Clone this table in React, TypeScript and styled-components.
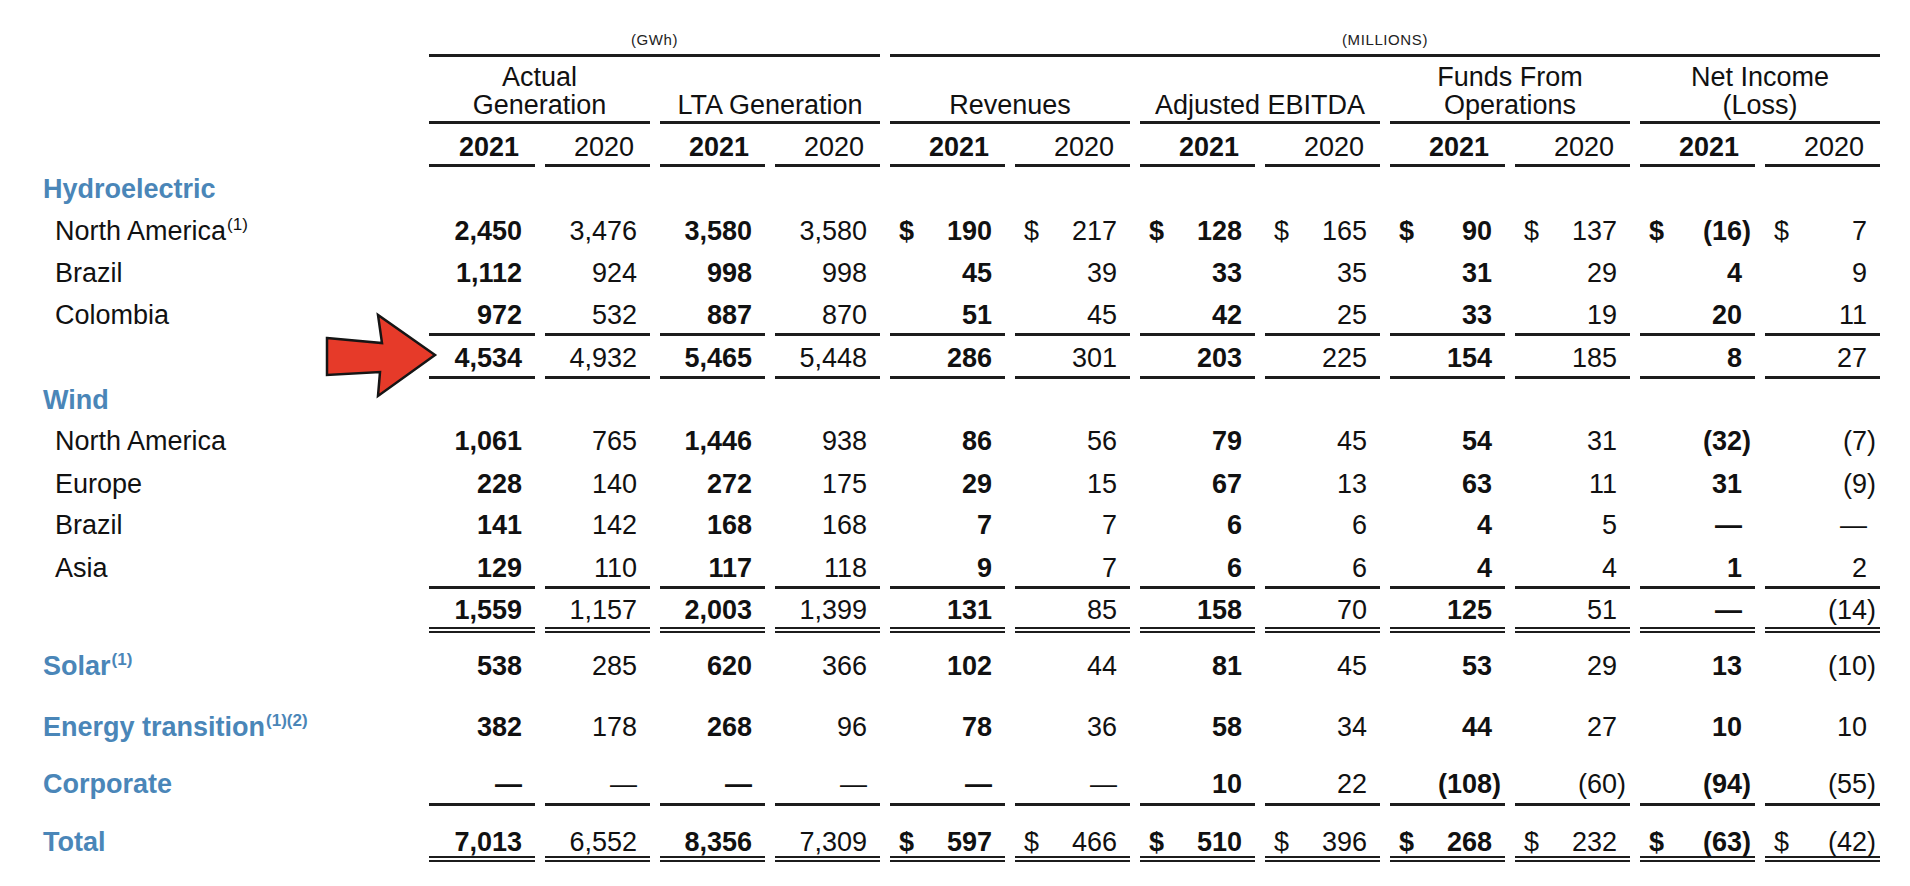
import React from "react";
import styled, { createGlobalStyle } from "styled-components";

const GlobalStyle = createGlobalStyle`
  html, body { margin: 0; padding: 0; background: #ffffff; }
  body { font-family: "Liberation Sans", Arial, sans-serif; color: #111111; }
`;

const BLUE = "#4a86b8";
const INK = "#1c1c1c";
const COLS = "419px 106px 105px 105px 105px repeat(8, 115px)";

type Rule = "none" | "single" | "double";

const ruleCss = (rule: Rule, visible: boolean) => {
  if (rule === "none") return "border-bottom: 0;";
  const w = rule === "double" ? 6 : 3;
  const style = rule === "double" ? "double" : "solid";
  return `border-bottom: ${w}px ${style} ${visible ? INK : "transparent"};`;
};

const Page = styled.div`
  position: relative;
  width: 1910px;
  height: 886px;
  overflow: hidden;
`;

const Table = styled.div`
  display: flex;
  flex-direction: column;
`;

const Row = styled.div<{ $pt: number; $pb: number }>`
  display: grid;
  grid-template-columns: ${COLS};
  column-gap: 10px;
  font-size: 27px;
  line-height: 28px;
  & > * {
    padding-top: ${(p) => p.$pt}px;
    padding-bottom: ${(p) => p.$pb}px;
  }
`;

const UnitCell = styled.div<{ $span: number; $rule: Rule; $visible: boolean }>`
  grid-column: span ${(p) => p.$span};
  font-size: 15px;
  line-height: 18px;
  letter-spacing: 0.6px;
  text-align: center;
  color: #222;
  ${(p) => ruleCss(p.$rule, p.$visible)}
`;

const GroupCell = styled.div<{ $rule: Rule; $visible: boolean; $span: number }>`
  grid-column: span ${(p) => p.$span};
  display: flex;
  flex-direction: column;
  justify-content: flex-end;
  align-items: center;
  text-align: center;
  ${(p) => ruleCss(p.$rule, p.$visible)}
`;

const YearCell = styled.div<{ $bold: boolean; $rule: Rule; $visible: boolean }>`
  text-align: right;
  padding-right: 16px;
  font-weight: ${(p) => (p.$bold ? 700 : 400)};
  ${(p) => ruleCss(p.$rule, p.$visible)}
`;

const LabelCell = styled.div<{ $head: boolean; $rule: Rule }>`
  padding-left: ${(p) => (p.$head ? 43 : 55)}px;
  color: ${(p) => (p.$head ? BLUE : "#111")};
  font-weight: ${(p) => (p.$head ? 700 : 400)};
  white-space: nowrap;
  ${(p) => ruleCss(p.$rule, false)}
`;

const NumCell = styled.div<{ $bold: boolean; $rule: Rule; $visible: boolean }>`
  display: flex;
  justify-content: space-between;
  align-items: baseline;
  padding-left: 9px;
  padding-right: 13px;
  font-weight: ${(p) => (p.$bold ? 700 : 400)};
  white-space: nowrap;
  ${(p) => ruleCss(p.$rule, p.$visible)}
`;

const Dollar = styled.span``;

const Amount = styled.span`
  margin-left: auto;
`;

const Hang = styled.span`
  margin-right: -9px;
`;

const Sup = styled.sup`
  font-size: 17px;
  line-height: 0;
  vertical-align: 10px;
  font-weight: inherit;
  margin-left: 1px;
`;

const ArrowSvg = styled.svg`
  position: absolute;
  left: 320px;
  top: 310px;
  width: 122px;
  height: 92px;
  overflow: visible;
`;

interface DataRow {
  label?: string;
  sup?: string;
  head?: boolean;
  values?: string[];
  dollar?: boolean;
  rule?: Rule;
  pt: number;
  pb: number;
}

const rows: DataRow[] = [
  { label: "Hydroelectric", head: true, pt: 8, pb: 7 },
  {
    label: "North America",
    sup: "(1)",
    values: ["2,450", "3,476", "3,580", "3,580", "190", "217", "128", "165", "90", "137", "(16)", "7"],
    dollar: true,
    pt: 7,
    pb: 7,
  },
  {
    label: "Brazil",
    values: ["1,112", "924", "998", "998", "45", "39", "33", "35", "31", "29", "4", "9"],
    pt: 7,
    pb: 7,
  },
  {
    label: "Colombia",
    values: ["972", "532", "887", "870", "51", "45", "42", "25", "33", "19", "20", "11"],
    rule: "single",
    pt: 7,
    pb: 4,
  },
  {
    values: ["4,534", "4,932", "5,465", "5,448", "286", "301", "203", "225", "154", "185", "8", "27"],
    rule: "single",
    pt: 8,
    pb: 4,
  },
  { label: "Wind", head: true, pt: 7, pb: 6 },
  {
    label: "North America",
    values: ["1,061", "765", "1,446", "938", "86", "56", "79", "45", "54", "31", "(32)", "(7)"],
    pt: 7,
    pb: 7,
  },
  {
    label: "Europe",
    values: ["228", "140", "272", "175", "29", "15", "67", "13", "63", "11", "31", "(9)"],
    pt: 8,
    pb: 5,
  },
  {
    label: "Brazil",
    values: ["141", "142", "168", "168", "7", "7", "6", "6", "4", "5", "—", "—"],
    pt: 8,
    pb: 6,
  },
  {
    label: "Asia",
    values: ["129", "110", "117", "118", "9", "7", "6", "6", "4", "4", "1", "2"],
    rule: "single",
    pt: 9,
    pb: 4,
  },
  {
    values: ["1,559", "1,157", "2,003", "1,399", "131", "85", "158", "70", "125", "51", "—", "(14)"],
    rule: "double",
    pt: 7,
    pb: 3,
  },
  {
    label: "Solar",
    sup: "(1)",
    head: true,
    values: ["538", "285", "620", "366", "102", "44", "81", "45", "53", "29", "13", "(10)"],
    pt: 19,
    pb: 16,
  },
  {
    label: "Energy transition",
    sup: "(1)(2)",
    head: true,
    values: ["382", "178", "268", "96", "78", "36", "58", "34", "44", "27", "10", "10"],
    pt: 17,
    pb: 19,
  },
  {
    label: "Corporate",
    head: true,
    values: ["—", "—", "—", "—", "—", "—", "10", "22", "(108)", "(60)", "(94)", "(55)"],
    rule: "single",
    pt: 10,
    pb: 5,
  },
  {
    label: "Total",
    head: true,
    values: ["7,013", "6,552", "8,356", "7,309", "597", "466", "510", "396", "268", "232", "(63)", "(42)"],
    dollar: true,
    rule: "double",
    pt: 22,
    pb: 0,
  },
];

const groups: { lines: string[] }[] = [
  { lines: ["Actual", "Generation"] },
  { lines: ["LTA Generation"] },
  { lines: ["Revenues"] },
  { lines: ["Adjusted EBITDA"] },
  { lines: ["Funds From", "Operations"] },
  { lines: ["Net Income", "(Loss)"] },
];

const renderAmount = (v: string) => {
  if (v.endsWith(")")) {
    return (
      <>
        {v.slice(0, -1)}
        <Hang>)</Hang>
      </>
    );
  }
  return v;
};

const YEARS = Array.from({ length: 12 }, (_, i) => (i % 2 === 0 ? "2021" : "2020"));

export default function App() {
  return (
    <Page>
      <GlobalStyle />
      <Table>
        <Row $pt={31} $pb={5}>
          <UnitCell $span={1} $rule="single" $visible={false} />
          <UnitCell $span={4} $rule="single" $visible>
            (GWh)
          </UnitCell>
          <UnitCell $span={8} $rule="single" $visible>
            (MILLIONS)
          </UnitCell>
        </Row>
        <Row $pt={6} $pb={2}>
          <GroupCell $span={1} $rule="single" $visible={false} />
          {groups.map((g, i) => (
            <GroupCell key={i} $span={2} $rule="single" $visible>
              {g.lines.map((l) => (
                <span key={l}>{l}</span>
              ))}
            </GroupCell>
          ))}
        </Row>
        <Row $pt={9} $pb={3}>
          <YearCell $bold={false} $rule="single" $visible={false} />
          {YEARS.map((y, i) => (
            <YearCell key={i} $bold={i % 2 === 0} $rule="single" $visible>
              {y}
            </YearCell>
          ))}
        </Row>
        {rows.map((r, ri) => {
          const rule: Rule = r.rule ?? "none";
          return (
            <Row key={ri} $pt={r.pt} $pb={r.pb}>
              <LabelCell $head={!!r.head} $rule={rule}>
                {r.label}
                {r.sup && <Sup>{r.sup}</Sup>}
              </LabelCell>
              {r.values?.map((v, i) => (
                <NumCell key={i} $bold={i % 2 === 0} $rule={rule} $visible>
                  {r.dollar && i >= 4 && <Dollar>$</Dollar>}
                  <Amount>{renderAmount(v)}</Amount>
                </NumCell>
              ))}
            </Row>
          );
        })}
      </Table>
      <ArrowSvg viewBox="0 0 122 92">
        <polygon
          points="7,28 62,33 58,5 115,45 58,86 60,62 7,65"
          fill="#e63a29"
          stroke="#151515"
          strokeWidth="2.5"
          strokeLinejoin="miter"
        />
      </ArrowSvg>
    </Page>
  );
}
